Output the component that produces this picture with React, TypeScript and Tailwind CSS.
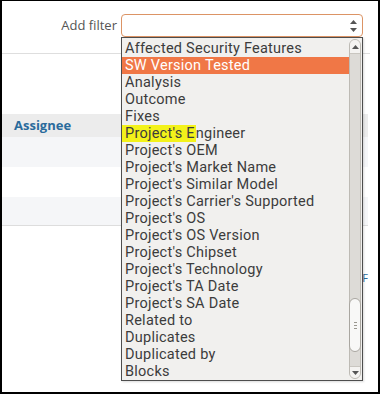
import React from "react";

const options = [
  "Affected Security Features",
  "SW Version Tested",
  "Analysis",
  "Outcome",
  "Fixes",
  "Project's Engineer",
  "Project's OEM",
  "Project's Market Name",
  "Project's Similar Model",
  "Project's Carrier's Supported",
  "Project's OS",
  "Project's OS Version",
  "Project's Chipset",
  "Project's Technology",
  "Project's TA Date",
  "Project's SA Date",
  "Related to",
  "Duplicates",
  "Duplicated by",
  "Blocks",
];

function OptionRow({ label, index }: { label: string; index: number }) {
  if (index === 1) {
    return <div className="h-[17px] leading-[17px] pl-[3px] bg-[#f07746] text-white whitespace-nowrap">{label}</div>;
  }
  if (label === "Project's Engineer") {
    // marker highlight from the screenshot
    return (
      <div className="h-[17px] leading-[17px] whitespace-nowrap">
        <span className="bg-[#f3f21a] pl-[3px] pr-[1px]">Project's E</span>ngineer
      </div>
    );
  }
  return <div className="h-[17px] leading-[17px] pl-[3px] whitespace-nowrap">{label}</div>;
}

function Scrollbar() {
  return (
    <div className="w-[13px] py-[1px] pr-[1px] flex">
      <div className="flex-1 flex flex-col rounded-full bg-[#dddbd7] border border-[#bdbab4]">
        <div className="h-[14px] flex items-center justify-center rounded-t-full bg-[#f4f3f1] border-b border-[#c9c6c0]">
          <svg width="7" height="4" viewBox="0 0 7 4"><path d="M0 4 L3.5 0 L7 4 Z" fill="#555" /></svg>
        </div>
        <div className="flex-1 flex flex-col justify-end pb-[14px]">
          <div className="h-[54px] -mx-[1px] rounded-full bg-[#f8f8f7] border border-[#a9a6a0] flex flex-col items-center justify-center gap-[2px]">
            <div className="w-[3px] h-[1px] bg-[#9a978f]" />
            <div className="w-[3px] h-[1px] bg-[#9a978f]" />
            <div className="w-[3px] h-[1px] bg-[#9a978f]" />
          </div>
        </div>
        <div className="h-[12px] flex items-center justify-center rounded-b-full bg-[#f4f3f1] border-t border-[#c9c6c0]">
          <svg width="7" height="4" viewBox="0 0 7 4"><path d="M0 0 L3.5 4 L7 0 Z" fill="#555" /></svg>
        </div>
      </div>
    </div>
  );
}

export default function App() {
  return (
    <div className="w-[380px] h-[394px] relative overflow-hidden bg-white border-l-2 border-t border-r-2 border-b-2 border-black" style={{ fontFamily: '"Open Sans", "Noto Sans", sans-serif' }}>
      <div className="flex items-center pt-[13px]">
        <div className="w-[115px] text-right text-[13px] text-[#555]">Add filter</div>
        <div className="ml-[4px] w-[242px] h-[23px] rounded-[4px] border border-[#dc9465] bg-white flex items-center justify-end pr-[5px]">
          <svg width="7" height="12" viewBox="0 0 7 12">
            <path d="M0 4 L3.5 0 L7 4 Z" fill="#555" />
            <path d="M0 8 L3.5 12 L7 8 Z" fill="#555" />
          </svg>
        </div>
      </div>
      <div className="mt-[16px] mr-[8px] h-[1px] bg-[#dedede]" />

      <div className="mt-[60px] mr-[10px]">
        <div className="h-[23px] bg-[#ececec] flex items-center pl-[12px] text-[13px] font-bold text-[#2a6b9c]">Assignee</div>
        <div className="h-[30px] bg-[#f5f6f8]" />
        <div className="h-[30px] bg-white" />
        <div className="h-[29px] bg-[#f5f6f8] border-b border-[#dddddd]" />
        <div className="mt-[44px] text-right text-[11px] text-[#2a6b9c]">PDF</div>
      </div>

      <div className="absolute left-[119px] top-[36px] w-[242px] h-[344px] border border-[#4d4d4d] bg-[#f1f0ee] flex shadow-[1px_1px_2px_rgba(0,0,0,0.15)]">
        <div className="flex-1 pt-[2px] text-[14.5px] tracking-[0.25px] text-[#3c3c3c] overflow-hidden" style={{ fontFamily: 'Roboto, "Noto Sans", sans-serif' }}>
          {options.map((o, i) => (
            <OptionRow key={o} label={o} index={i} />
          ))}
        </div>
        <Scrollbar />
      </div>
    </div>
  );
}
